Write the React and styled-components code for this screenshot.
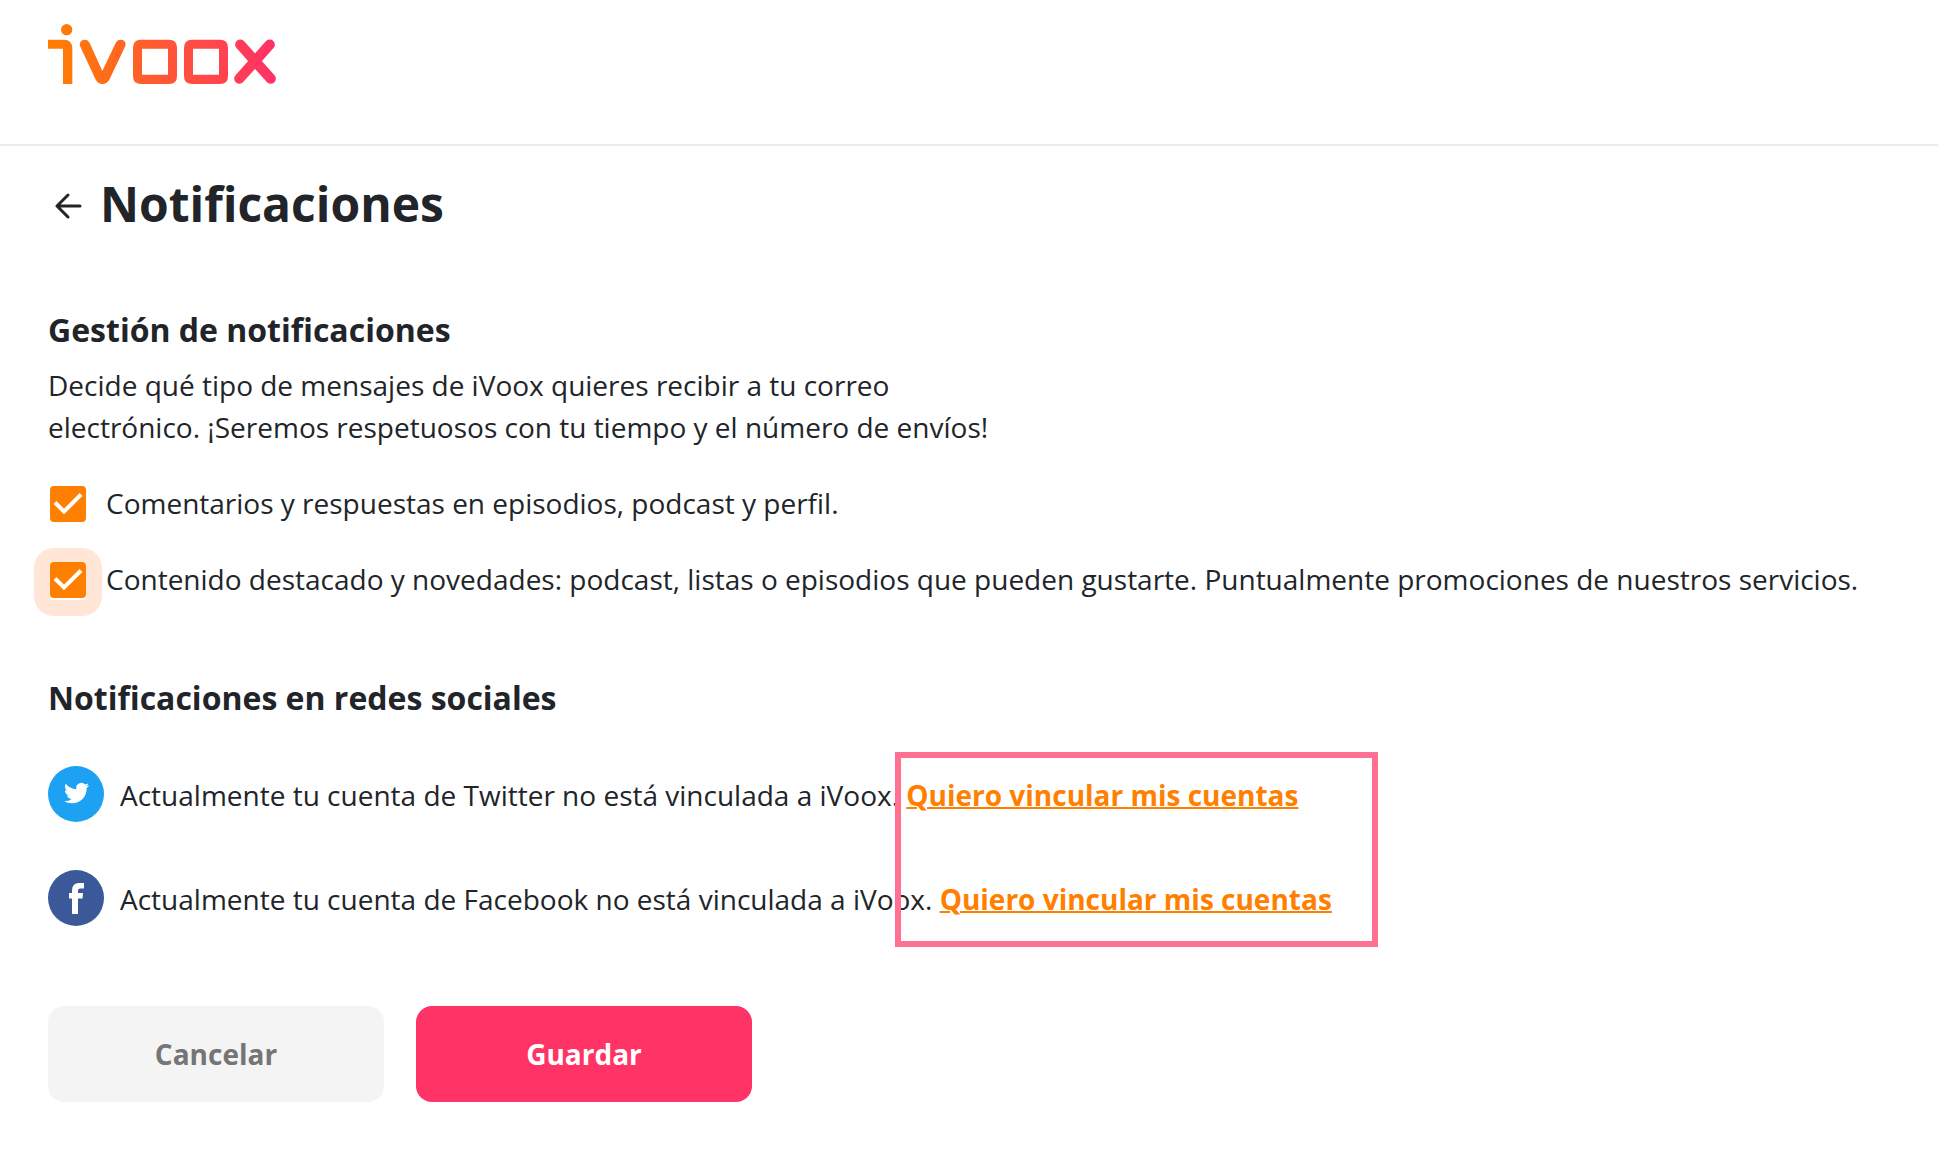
import React from "react";
import styled, { createGlobalStyle } from "styled-components";

const GlobalStyle = createGlobalStyle`
  *, *::before, *::after { box-sizing: border-box; }
  body {
    margin: 0;
    background: #fff;
    color: #212529;
    font-family: "Open Sans", "Noto Sans", sans-serif;
    font-size: 28px;
    line-height: 42px;
  }
`;

const Header = styled.header`
  padding: 24px 48px 60px;
  border-bottom: 2px solid #ececec;
`;

const LogoLink = styled.a`
  display: inline-block;
  vertical-align: top;
  svg { display: block; }
`;

const Main = styled.main`
  padding: 22px 48px 60px;
`;

const TitleRow = styled.div`
  display: flex;
  align-items: center;
  gap: 12px;
  margin-bottom: 66px;
`;

const BackButton = styled.button`
  display: flex;
  width: 40px;
  height: 40px;
  margin-top: 4px;
  padding: 0;
  align-items: center;
  justify-content: center;
  border: 0;
  background: none;
  color: inherit;
`;

const Title = styled.h1`
  margin: 0;
  font-size: 48px;
  line-height: 72px;
  font-weight: 700;
`;

const Heading = styled.h2`
  margin: 0;
  font-size: 32px;
  line-height: 48px;
  font-weight: 700;
`;

const Intro = styled.p`
  max-width: 960px;
  margin: 10px 0 34px;
`;

const Options = styled.div`
  display: flex;
  flex-direction: column;
  gap: 34px;
  margin-bottom: 74px;
`;

const Option = styled.label`
  display: flex;
  align-items: center;
  gap: 20px;
  padding-left: 2px;
`;

const CheckSlot = styled.span`
  display: grid;
  flex: none;
  width: 36px;
  height: 36px;
  margin-top: 2px;
  > * { grid-area: 1 / 1; }
`;

const FocusHalo = styled.span`
  margin: -14px -16px -18px;
  border-radius: 20px;
  background: #ffe6d7;
`;

const Check = styled.input`
  appearance: none;
  width: 36px;
  height: 36px;
  margin: 0;
  border-radius: 4px;
  outline: none;
  background: #fff;
  box-shadow: 0 2px 0 #fff;
  &:checked { background: #ff8000; }
`;

const Tick = styled.svg`
  z-index: 1;
  pointer-events: none;
`;

const SocialList = styled.div`
  position: relative;
  display: flex;
  flex-direction: column;
  gap: 48px;
  margin: 44px 0 80px;
`;

const SocialRow = styled.div`
  display: flex;
  align-items: center;
  gap: 16px;
  svg { flex: none; }
`;

const SocialText = styled.p`
  margin: 0;
  padding-top: 2px;
`;

const AccountLink = styled.a`
  color: #ff8000;
  font-weight: 700;
  text-decoration: underline;
  text-decoration-thickness: 2px;
`;

const Highlight = styled.div`
  position: absolute;
  top: -14px;
  left: 847px;
  width: 483px;
  height: 195px;
  border: 6px solid #ff7093;
  pointer-events: none;
`;

const Actions = styled.div`
  display: flex;
  flex-wrap: wrap;
  gap: 32px;
`;

const Button = styled.button`
  width: 336px;
  height: 96px;
  border: 0;
  border-radius: 16px;
  font: inherit;
  font-weight: 700;
  color: ${(p) => (p.$primary ? "#fff" : "#757575")};
  background: ${(p) => (p.$primary ? "#ff3366" : "#f4f4f4")};
`;

function Logo() {
  return (
    <svg width="228" height="60" viewBox="54 42 684 180" role="img" aria-label="iVoox">
      <defs>
        <linearGradient id="brand" gradientUnits="userSpaceOnUse" x1="54" y1="150" x2="738" y2="120">
          <stop offset="0" stopColor="#ff8000" />
          <stop offset="1" stopColor="#ff3068" />
        </linearGradient>
      </defs>
      <g fill="url(#brand)">
        <circle cx="110" cy="59" r="17" />
        <path d="M54 89H101Q127 89 127 116V222H99V116H54Z" />
        <path d="M151 110C146 99 153 89 164 89Q174 89 179 99L217 183L257 99Q262 89 272 89C284 89 290 99 285 110L239 207Q232 222 217 222Q203 222 196 207Z" />
        <path fillRule="evenodd" d="M333 89H417Q441 89 441 113V198Q441 222 417 222H333Q309 222 309 198V113Q309 89 333 89ZM336 116V194H414V116Z" />
        <path fillRule="evenodd" d="M486 89H570Q594 89 594 113V198Q594 222 570 222H486Q462 222 462 198V113Q462 89 486 89ZM489 116V194H567V116Z" />
      </g>
      <path d="M631 104L722 206M719 104L628 206" fill="none" stroke="url(#brand)" strokeWidth="31" strokeLinecap="round" />
    </svg>
  );
}

function CheckOption({ name, focused, children }) {
  return (
    <Option>
      <CheckSlot>
        {focused && <FocusHalo />}
        <Check type="checkbox" name={name} defaultChecked />
        <Tick width="36" height="36" viewBox="0 0 36 36" aria-hidden="true">
          <path d="M5 16.500L14 25.500L31 8.500" fill="none" stroke="#fff" strokeWidth="4" />
        </Tick>
      </CheckSlot>
      <span>{children}</span>
    </Option>
  );
}

function TwitterIcon() {
  return (
    <svg width="56" height="56" viewBox="0 0 56 56" aria-hidden="true">
      <circle cx="28" cy="28" r="28" fill="#1da1f2" />
      <g transform="translate(16 14.5) scale(1.05)">
        <path fill="#fff" d="M23.953 4.57a10 10 0 01-2.825.775 4.958 4.958 0 002.163-2.723c-.951.555-2.005.959-3.127 1.184a4.92 4.92 0 00-8.384 4.482C7.69 8.095 4.067 6.13 1.64 3.162a4.822 4.822 0 00-.666 2.475c0 1.71.87 3.213 2.188 4.096a4.904 4.904 0 01-2.228-.616v.06a4.923 4.923 0 003.946 4.827 4.996 4.996 0 01-2.212.085 4.936 4.936 0 004.604 3.417 9.867 9.867 0 01-6.102 2.105c-.39 0-.779-.023-1.17-.067a13.995 13.995 0 007.557 2.209c9.053 0 13.998-7.496 13.998-13.985 0-.21 0-.42-.015-.63A9.935 9.935 0 0024 4.59z" />
      </g>
    </svg>
  );
}

function FacebookIcon() {
  return (
    <svg width="56" height="56" viewBox="0 0 56 56" aria-hidden="true">
      <circle cx="28" cy="28" r="28" fill="#3b5998" />
      <path fill="#fff" d="M24 44V28.500H21V23H24V20.500Q24 13 31 13H36V18.500H32.500Q30 18.500 30 20.500V23H35L34.500 28.500H30V44Z" />
    </svg>
  );
}

export default function App() {
  return (
    <>
      <GlobalStyle />
      <Header>
        <LogoLink href="#"><Logo /></LogoLink>
      </Header>
      <Main>
        <TitleRow>
          <BackButton type="button" aria-label="Volver">
            <svg width="28" height="28" viewBox="0 0 28 28" fill="none" stroke="currentColor" strokeWidth="3" strokeLinecap="round" strokeLinejoin="round" aria-hidden="true">
              <path d="M26 14H3M14 3L3 14L14 25" />
            </svg>
          </BackButton>
          <Title>Notificaciones</Title>
        </TitleRow>
        <Heading>Gestión de notificaciones</Heading>
        <Intro>
          Decide qué tipo de mensajes de iVoox quieres recibir a tu correo electrónico. ¡Seremos respetuosos con tu tiempo y el número de envíos!
        </Intro>
        <Options>
          <CheckOption name="comments">Comentarios y respuestas en episodios, podcast y perfil.</CheckOption>
          <CheckOption name="featured" focused>
            Contenido destacado y novedades: podcast, listas o episodios que pueden gustarte. Puntualmente promociones de nuestros servicios.
          </CheckOption>
        </Options>
        <Heading>Notificaciones en redes sociales</Heading>
        <SocialList>
          <SocialRow>
            <TwitterIcon />
            <SocialText>
              Actualmente tu cuenta de Twitter no está vinculada a iVoox. <AccountLink href="#">Quiero vincular mis cuentas</AccountLink>
            </SocialText>
          </SocialRow>
          <SocialRow>
            <FacebookIcon />
            <SocialText>
              Actualmente tu cuenta de Facebook no está vinculada a iVoox. <AccountLink href="#">Quiero vincular mis cuentas</AccountLink>
            </SocialText>
          </SocialRow>
          <Highlight />
        </SocialList>
        <Actions>
          <Button type="button">Cancelar</Button>
          <Button type="submit" $primary>Guardar</Button>
        </Actions>
      </Main>
    </>
  );
}
